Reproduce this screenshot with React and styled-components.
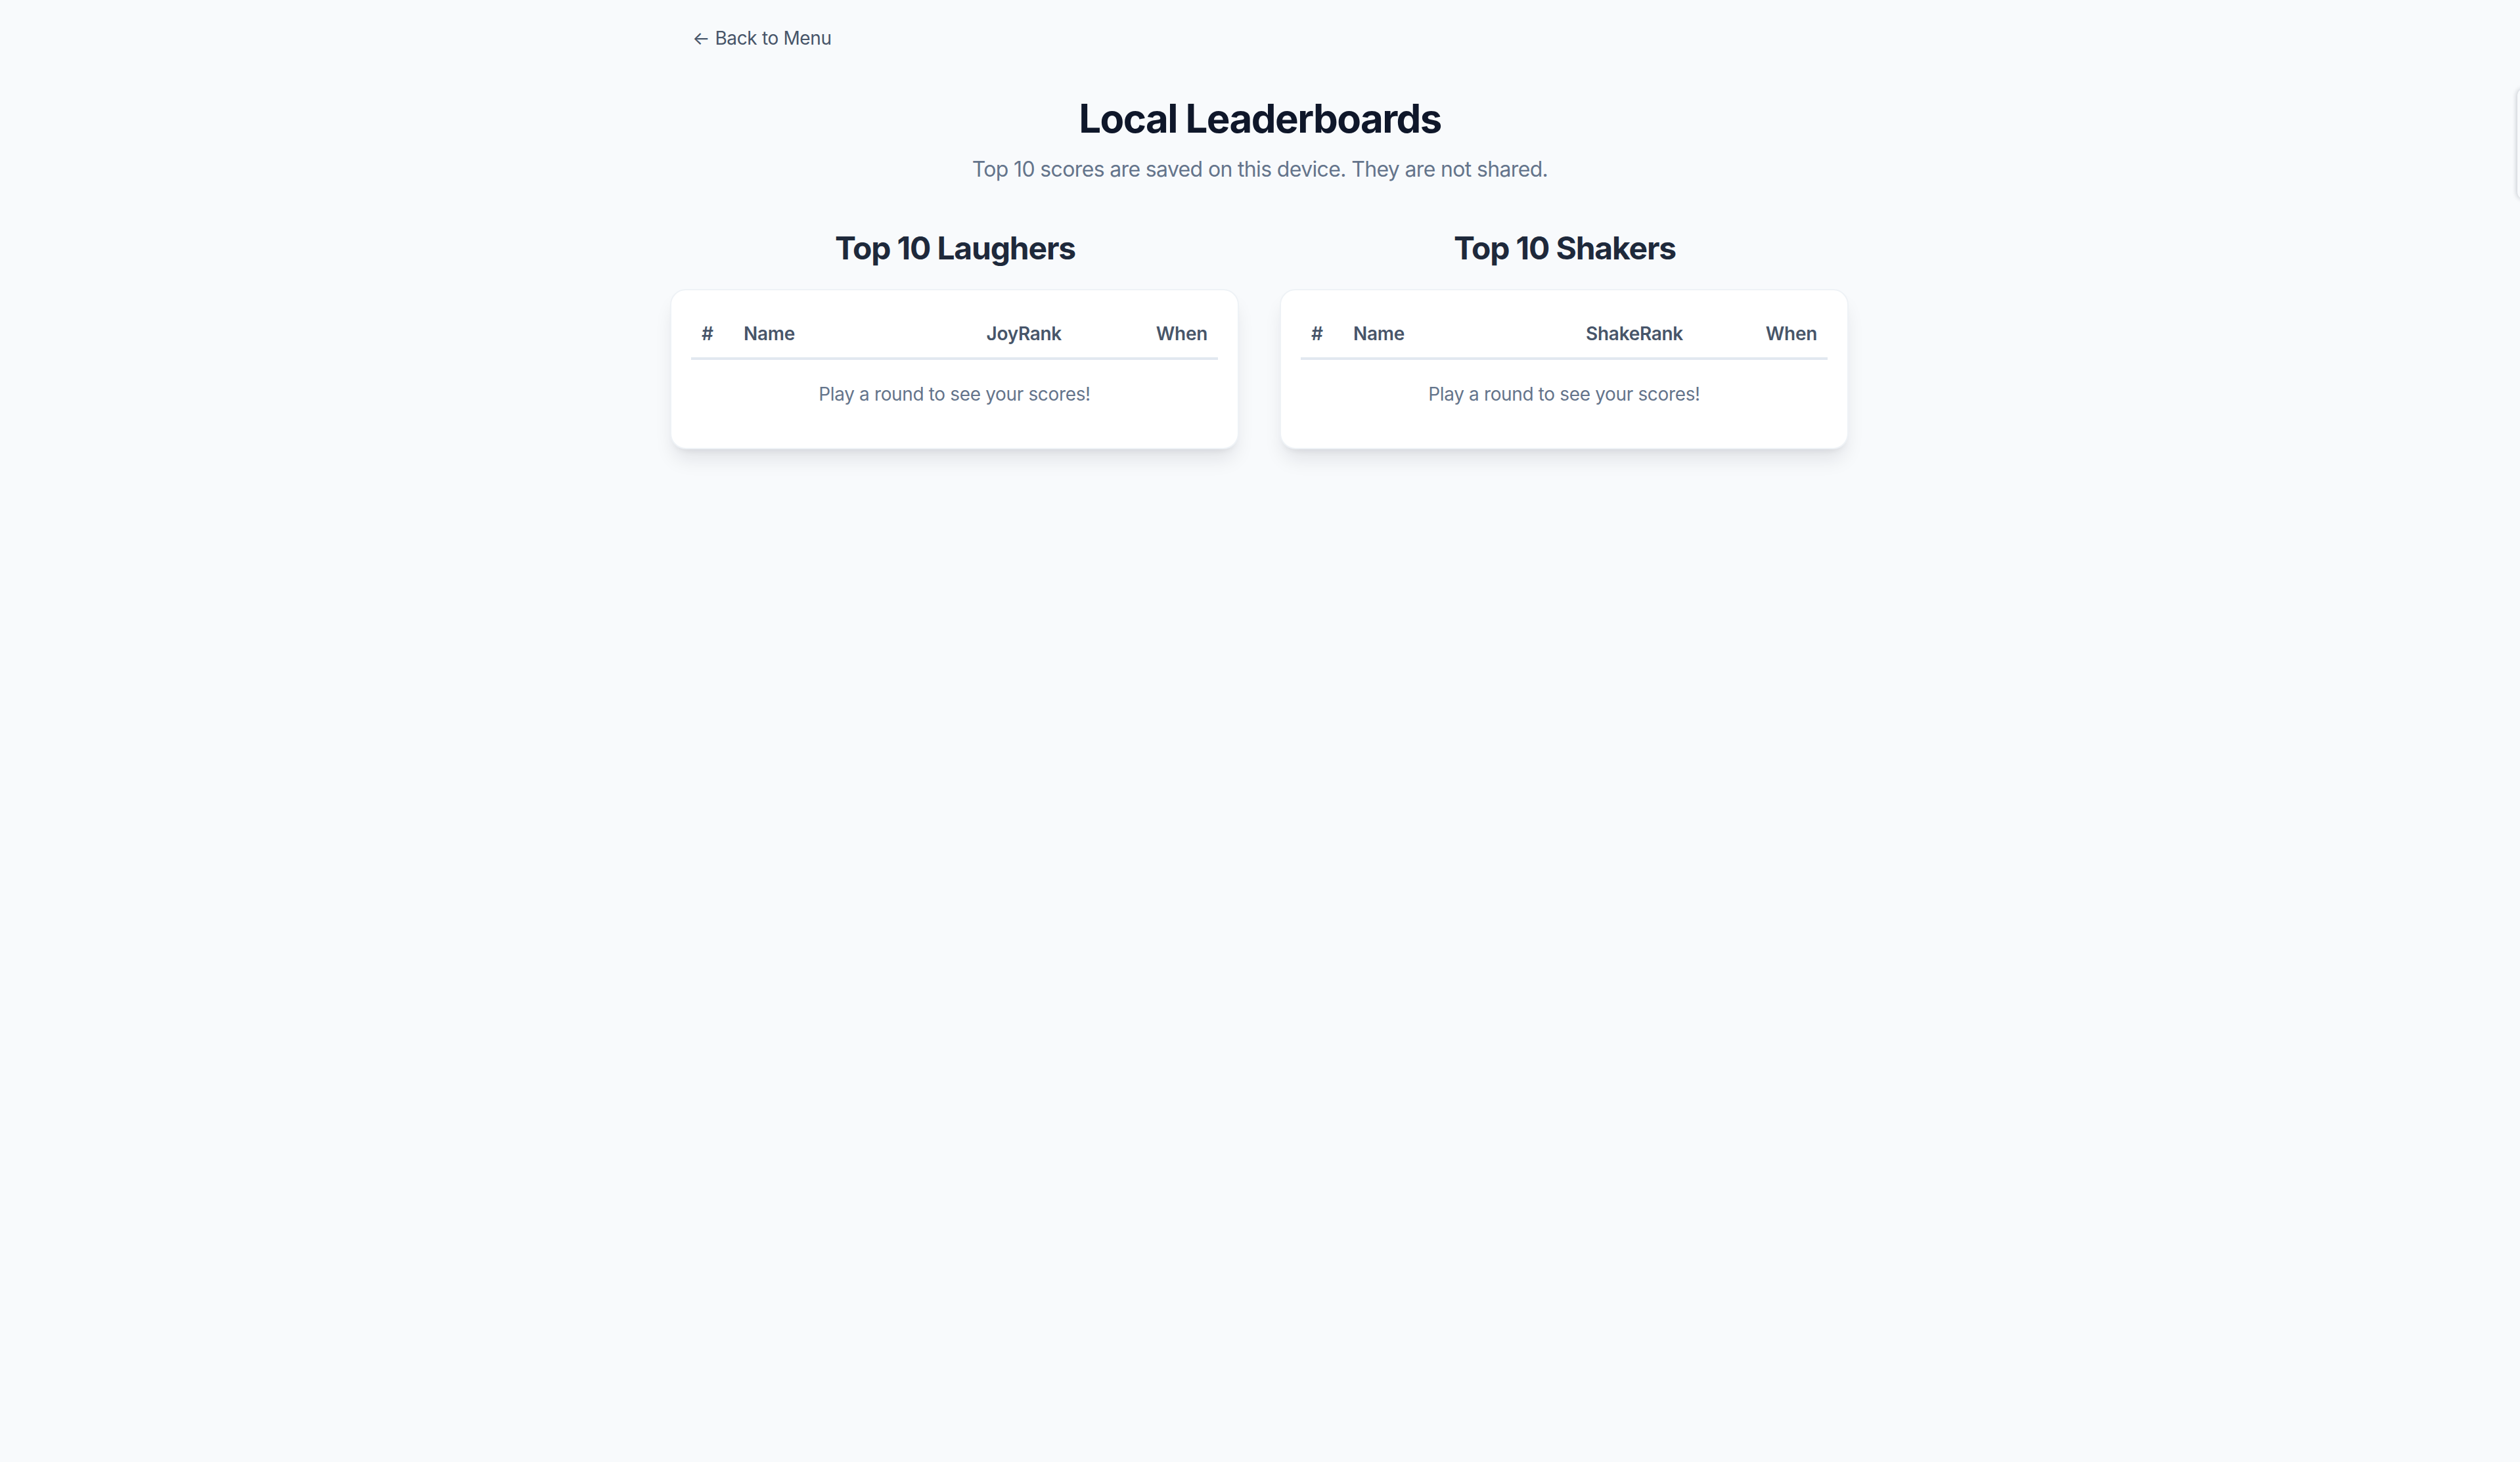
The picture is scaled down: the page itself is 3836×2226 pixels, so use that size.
import styled, { createGlobalStyle } from "styled-components";

const GlobalStyle = createGlobalStyle`
  * {
    box-sizing: border-box;
  }
  body {
    margin: 0;
    background: #f8fafc;
    font-family: Inter, "Noto Sans", "Liberation Sans", sans-serif;
    color: #0f172a;
  }
`;

const Page = styled.main`
  min-height: 2226px;
  padding: 38px 0 0;
  background: #f8fafc;
`;

const Container = styled.div`
  max-width: 1792px;
  margin: 0 auto;
`;

const BackLink = styled.a`
  display: inline-flex;
  align-items: center;
  gap: 8px;
  margin-left: 32px;
  font-size: 28px;
  line-height: 40px;
  letter-spacing: -0.35px;
  color: #475569;
  text-decoration: none;
  cursor: pointer;
`;

const Header = styled.header`
  margin-top: 66px;
  text-align: center;
`;

const Title = styled.h1`
  margin: 0;
  font-size: 60px;
  line-height: 72px;
  font-weight: 700;
  letter-spacing: -1.6px;
  color: #0f172a;
`;

const Subtitle = styled.p`
  margin: 18px 0 0;
  font-size: 32px;
  line-height: 48px;
  letter-spacing: -0.65px;
  color: #64748b;
`;

const Boards = styled.div`
  display: grid;
  grid-template-columns: 1fr 1fr;
  gap: 64px;
  margin-top: 64px;
`;

const Board = styled.section`
  display: flex;
  flex-direction: column;
`;

const BoardTitle = styled.h2`
  margin: 0 0 30px;
  font-size: 48px;
  line-height: 64px;
  font-weight: 700;
  letter-spacing: -1.2px;
  text-align: center;
  color: #1e293b;
`;

const Card = styled.div`
  background: #fff;
  border: 2px solid #eef2f6;
  border-radius: 24px;
  padding: 30px;
  margin-left: -2px;
  box-shadow: 0 20px 30px -6px rgba(15, 23, 42, 0.1),
    0 8px 12px -8px rgba(15, 23, 42, 0.1);
`;

const Row = styled.div`
  display: grid;
  grid-template-columns: ${(p) => p.$cols};
  border-bottom: 4px solid #e2e8f0;
`;

const HeadCell = styled.div`
  padding: 16px;
  font-size: 28px;
  line-height: 40px;
  font-weight: 600;
  letter-spacing: -0.3px;
  color: #475569;
  text-align: ${(p) => p.$align || "left"};
`;

const Empty = styled.div`
  padding: 32px 16px;
  font-size: 28px;
  line-height: 40px;
  letter-spacing: -0.35px;
  color: #64748b;
  text-align: center;
`;

const SideTab = styled.div`
  position: fixed;
  top: 134px;
  right: -60px;
  width: 64px;
  height: 170px;
  border-radius: 12px;
  background: #f8fafc;
  box-shadow: -2px 0 6px rgba(15, 23, 42, 0.18);
`;

const boards = [
  { title: "Top 10 Laughers", rank: "JoyRank", cols: "64px 1fr 220px 222px" },
  { title: "Top 10 Shakers", rank: "ShakeRank", cols: "64px 1fr 220px 204px" },
];

const LeaderBoard = ({ title, rank, cols }) => (
  <Board>
    <BoardTitle>{title}</BoardTitle>
    <Card>
      <Row $cols={cols}>
        <HeadCell>#</HeadCell>
        <HeadCell>Name</HeadCell>
        <HeadCell $align="right">{rank}</HeadCell>
        <HeadCell $align="right">When</HeadCell>
      </Row>
      <Empty>Play a round to see your scores!</Empty>
    </Card>
  </Board>
);

export default function App() {
  return (
    <>
      <GlobalStyle />
      <Page>
        <Container>
          <BackLink>
            <span>←</span>
            <span>Back to Menu</span>
          </BackLink>
          <Header>
            <Title>Local Leaderboards</Title>
            <Subtitle>
              Top 10 scores are saved on this device. They are not shared.
            </Subtitle>
          </Header>
          <Boards>
            {boards.map((b) => (
              <LeaderBoard key={b.title} {...b} />
            ))}
          </Boards>
        </Container>
        <SideTab />
      </Page>
    </>
  );
}
